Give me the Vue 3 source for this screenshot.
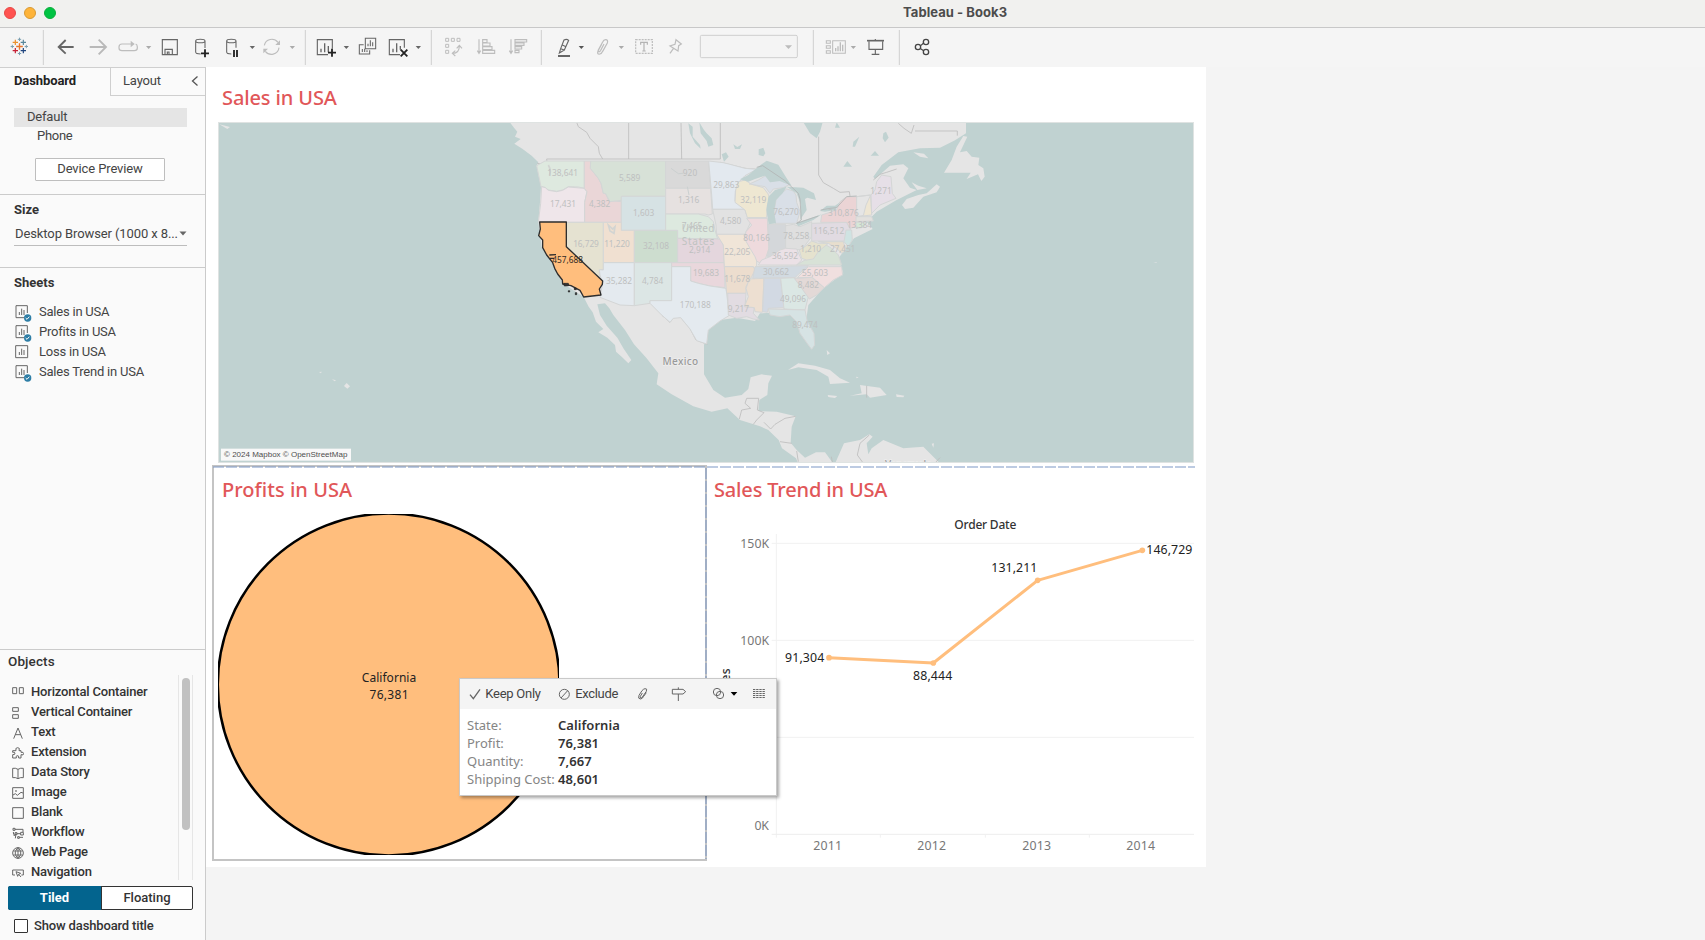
<script setup>
const plusPath = (x, y, r) => `M${x - r} ${y}H${x + r}M${x} ${y - r}V${y + r}`
const caret = (x, c) => `<path fill="${c}" d="M${x - 8} 138h16l-8 9z"/>`
const S = (c, w, d, extra = '') => `<path fill="none" stroke="${c}" stroke-width="${w}" ${extra} d="${d}"/>`
const sep = (x) => `<path stroke="#cfcfcf" stroke-width="3" d="M${x} 90V195"/>`

/* Artwork units are one third of a pixel; each slot starts at its own x. */
const slots = [
  { x: 0, art:
    S('#e8762d', 4, plusPath(58.5, 139.5, 10)) + S('#eb912c', 3.6, plusPath(46, 127, 8)) +
    S('#59879b', 3.6, plusPath(70, 127, 8)) + S('#c72035', 3.6, plusPath(46, 152, 8)) +
    S('#1f447e', 3.6, plusPath(70, 152, 8)) +
    S('#7b9fb0', 3, plusPath(58.5, 118, 5) + plusPath(58.5, 160.5, 5) + plusPath(37, 139.5, 5) + plusPath(79, 139.5, 5)) + sep(130) },
  { x: 52, art: S('#666', 5.6, 'M177 141H221M197 120L176 141L197 161') },
  { x: 84, art: S('#b9b9b9', 5.6, 'M269 141H317M296 119L318 141L296 163') },
  { x: 112, art: S('#bdbdbd', 3.6, 'M400 132H366Q357 132 357 141V144Q357 152 366 152H403Q412 152 412 144V141Q412 134 407 132') +
    '<path fill="#bdbdbd" d="M392 122l12 10-12 10z"/>' + caret(446, '#ababab') },
  { x: 155, art: S('#666', 3.4, 'M487 119H532V164H487ZM495 164V148H517V164M502 163V156H507V163') },
  { x: 186, art: S('#666', 3.2, 'M587 123C587 116 615 116 615 123C615 130 587 130 587 123V156Q587 162 602 162M615 123V144') + S('#222', 5.5, plusPath(615, 160, 12)) },
  { x: 218, art: S('#666', 3.2, 'M680 123C680 116 708 116 708 123C708 130 680 130 680 123V156Q680 162 694 162M708 123V143') + S('#222', 5.5, 'M702 150V171M711 150V171') + caret(757, '#666') },
  { x: 260, art: S('#bdbdbd', 3.4, 'M793 136C797 116 822 112 834 127M837 143C834 166 807 168 796 154') +
    '<path fill="#bdbdbd" d="M840 121v14h-14zM790 160v-14h14z"/>' + caret(877, '#ababab') + sep(916) },
  { x: 310, art: S('#666', 3.4, 'M984 164H952V119H997V146') + S('#666', 4, 'M963 157V146M974 157V130M985 157V138') + S('#222', 5.5, plusPath(996, 158, 12)) + caret(1039, '#666') },
  { x: 354, art: S('#666', 3.2, 'M1096 115H1127V146H1096ZM1091 134H1078V162H1109V151') + S('#666', 3.2, 'M1104 139V131M1111 139V121M1118 139V127M1087 156V147M1094 156V146M1101 156V151') },
  { x: 384, art: S('#666', 3.4, 'M1200 164H1168V119H1213V143') + S('#666', 4, 'M1179 157V146M1190 157V130M1201 149V138') + S('#222', 5.5, 'M1202 149L1222 169M1222 149L1202 169') + caret(1255, '#666') + sep(1294) },
  { x: 440, art: S('#bdbdbd', 3, 'M1337 115h9v9h-9zM1354 115h9v9h-9zM1371 115h9v9h-9zM1337 133h9v9h-9zM1337 151h9v9h-9z') +
    S('#bdbdbd', 3.4, 'M1358 160Q1378 160 1378 138M1366 152L1357 160L1366 168M1370 145L1378 136L1386 145') },
  { x: 470, art: S('#bdbdbd', 3.4, 'M1437 118V158M1432 152L1437 160L1442 152M1448 119h13v9h-13zM1448 129h22v9h-22zM1448 140h28v9h-28zM1448 151h36v9h-36z') },
  { x: 503, art: S('#bdbdbd', 3.4, 'M1533 118V158M1528 152L1533 160L1538 152M1545 119h35v7h-35zM1545 129h27v7h-27zM1545 140h20v7h-20zM1545 151h12v7h-12z') + sep(1624) },
  { x: 550, art: S('#666', 3.3, 'M1692 120Q1700 116 1706 121L1693 150L1682 146ZM1682 146L1678 159L1693 150M1687 135L1698 140') + S('#666', 6, 'M1674 168H1710') + caret(1744, '#555') },
  { x: 592, art: S('#bdbdbd', 3.6, 'M1805 133L1794 153Q1790 164 1800 162Q1805 161 1808 154L1822 129Q1825 119 1817 119Q1811 119 1808 126L1795 150Q1794 156 1799 155L1802 151L1812 132') + caret(1864, '#ababab') },
  { x: 632, art: S('#bdbdbd', 3.6, 'M1907 119H1957V160H1907Z', 'stroke-dasharray="6 3"') + S('#b4b4b4', 3.6, 'M1922 134V127H1942V134M1932 127V153M1927 153H1937') },
  { x: 664, art: S('#bdbdbd', 3.6, 'M2028 119L2044 132L2036 137L2034 153L2010 138L2025 133ZM2020 146L2010 160') },
  { x: 696, art: '<rect x="2101" y="106" width="291" height="67" rx="4" fill="#f4f4f4" stroke="#cfcfcf" stroke-width="3"/><path fill="#bcbcbc" d="M2355 136h21l-10.500 11z"/>' + sep(2440) },
  { x: 818, art: S('#bdbdbd', 3.2, 'M2479 122h12v8h-12zM2479 137h12v8h-12zM2479 152h12v8h-12zM2498 122h38v38h-38z') + S('#bdbdbd', 4, 'M2507 154V144M2514 154V139M2521 154V127M2528 154V134') + caret(2560, '#ababab') },
  { x: 862, art: S('#666', 5, 'M2601 122H2652') + S('#666', 3.4, 'M2607 124V148H2648V124M2626 117V122M2626 148V163M2615 163H2638') + sep(2698) },
  { x: 904, art: S('#444', 3.6, 'M2762 137L2771 129M2762 146L2771 152') + '<g fill="none" stroke="#444" stroke-width="4"><circle cx="2778" cy="126" r="8"/><circle cx="2754" cy="141" r="8"/><circle cx="2778" cy="156" r="8"/></g>' },
  { x: 940 }
]
const tools = slots.slice(0, -1).map((s, i) => ({ ...s, w: slots[i + 1].x - s.x }))

const sheets = [
  { name: 'Sales in USA', used: true },
  { name: 'Profits in USA', used: true },
  { name: 'Loss in USA', used: false },
  { name: 'Sales Trend in USA', used: true }
]

const objects = [
  { name: 'Horizontal Container', d: 'M2 2H14V20H2ZM22 2H34V20H22Z' },
  { name: 'Vertical Container', d: 'M2 2H19V13H2ZM2 23H19V34H2Z' },
  { name: 'Text', d: 'M5 35L18 3L31 35M10 23H26' },
  { name: 'Extension', d: 'M2 33V23Q10 24 9 18Q8 14 2 16V11H12Q9 2 17 2Q25 2 21 11H27V16Q35 14 35 20Q35 26 27 23V33H20Q22 25 15 26Q11 27 13 33Z' },
  { name: 'Data Story', d: 'M18 7Q10 2 2 4V32Q10 30 18 35Q26 30 34 32V4Q26 2 18 7V35' },
  { name: 'Image', d: 'M2 2H34V34H2ZM3 24L10 20L16 25L27 16L33 18M11 11h2v2h-2z' },
  { name: 'Blank', d: 'M2 2H34V34H2Z' },
  { name: 'Workflow', d: 'M3 4h6v6h-6zM9 7H33M33 7V15M9 17h6v6h-6zM15 20H26M26 16h8v8h-8zM5 27L12 20L10 34M17 29h5v5h-5zM22 31H33M4 15Q3 24 10 26' },
  { name: 'Web Page', d: 'M18 2A16 16 0 1 0 18 34A16 16 0 1 0 18 2C7 12 7 24 18 34C29 24 29 12 18 2V34M4 12H32M4 24H32' },
  { name: 'Navigation', d: 'M9 24H2V9H34V24H28M12 14L26 19L20 22L17 28ZM20 22L27 30' }
]

/* Map shapes: west group and east group share the units above. */
const west = [
  ['#dee9df', '140,152 165,138 283,138 283,220 265,216 235,215 218,225 200,229 175,225 165,217 153,215'],
  ['#efe6ea', '155,215 166,218 175,226 200,230 218,226 235,216 283,220 291,230 284,262 284,322 145,322 152,265'],
  ['#ead6d7', '283,138 302,138 301,160 325,190 333,205 340,235 347,236 356,256 394,260 394,322 284,322 284,262 291,230 283,220'],
  ['#d7e1d7', '302,138 527,138 527,244 394,244 394,256 360,260 347,236 340,235 333,205 325,190 301,160'],
  ['#d6e2e4', '394,244 527,244 527,346 394,346'],
  ['#e5e2d1', '229,322 340,322 340,463 328,466 328,490 229,397'],
  ['#f0e0d1', '340,322 394,322 394,346 433,346 433,443 340,443'],
  ['#cdddcf', '433,346 563,346 563,443 433,443'],
  ['#e4eaef', '340,443 433,443 433,572 390,570 330,547 338,505 330,480 328,464 340,465'],
  ['#dce6e5', '433,443 545,443 545,557 480,557 480,565 433,572'],
  ['#d9d9d9', '527,138 656,138 662,220 527,220'],
  ['#e6e1e0', '527,220 662,220 667,297 655,300 645,297 527,297'],
  ['#dde9df', '527,297 625,297 655,305 670,320 675,345 683,372 563,370 563,346 527,346'],
  ['#e4d6dd', '563,370 690,372 700,390 703,443 563,443'],
  ['#e9d7dc', '545,443 703,443 705,518 660,513 625,505 602,498 602,455 545,455'],
  ['#e4eaef', '545,455 602,455 602,498 625,505 660,513 708,520 713,560 717,602 690,618 655,645 650,687 620,677 600,642 572,608 550,610 540,622 515,600 480,565 480,557 545,557'],
  ['#e3e9ef', '656,138 700,143 720,148 765,160 800,163 765,182 748,200 748,218 736,228 735,258 768,283 668,283 665,240'],
  ['#e2e2e2', '668,283 765,283 768,295 785,315 765,358 680,358 678,330'],
  ['#f0e5d8', '680,358 765,358 772,372 785,400 800,430 800,455 790,465 790,455 703,455 700,390'],
  ['#ecddce', '703,455 790,455 795,465 785,485 768,515 768,535 710,535'],
  ['#e2dce2', '713,535 768,535 765,575 793,578 790,595 808,615 790,612 770,605 740,610 715,600']
]
const east = [
  ['#eee7d2', '137,225 145,200 165,195 185,208 220,218 233,235 240,250 232,270 230,308 172,308 165,285 135,262'],
  ['#eedadd', '170,310 232,310 237,400 225,435 210,444 200,438 195,425 180,400 163,370 168,350 185,330'],
  ['#d4d7da', '233,328 287,328 287,400 265,412 255,425 232,425 237,395'],
  ['#dfdfdf', '287,332 310,328 330,335 365,320 365,365 355,378 335,405 287,400'],
  ['#d9dfe7', '255,325 252,290 258,255 270,238 290,222 310,228 318,240 320,262 330,290 320,325'],
  ['#d9dfe7', '178,207 205,195 230,180 240,200 265,195 300,208 280,218 250,222 240,235 225,215'],
  ['#ebe1e6', '205,450 215,435 240,425 270,405 287,400 320,402 335,435 320,450'],
  ['#d2dae1', '195,455 355,452 325,478 315,488 188,490'],
  ['#eddfd1', '178,492 222,490 217,592 195,590 193,578 163,575 175,545 168,520'],
  ['#d2d9e3', '222,490 272,490 282,578 235,580 232,592 218,590'],
  ['#dbe7e4', '272,490 315,488 355,545 345,585 282,582'],
  ['#d6e3e4', '235,582 345,585 352,620 372,655 374,690 365,703 355,690 330,655 320,620 300,600 270,605 240,600'],
  ['#e3d9d7', '313,490 365,487 403,518 380,540 358,552 335,520'],
  ['#f0dfdf', '322,488 355,455 455,455 458,480 430,495 403,518 367,487'],
  ['#d8e2d7', '320,450 345,435 370,430 400,385 425,400 445,420 455,450'],
  ['#e5e2ce', '328,405 345,395 365,378 385,385 415,385 385,410 370,432 350,435 335,430'],
  ['#e1dbe2', '365,325 470,322 482,345 470,378 365,378'],
  ['#ebd4d5', '392,322 395,300 440,285 450,260 470,245 500,245 500,335 480,340 470,322'],
  ['#eee6d3', '500,245 542,240 545,300 500,305 520,302 528,270 542,240'],
  ['#e6dfe7', '545,295 543,240 555,225 560,200 575,180 603,185 607,235 618,250 570,270'],
  ['#e2e0dd', '498,305 545,305 550,318 498,320'],
  ['#d5e8d7', '498,322 530,322 520,337 498,340'],
  ['#cfe3e2', '468,345 485,345 487,375 475,395 462,380'],
  ['#e8decd', '385,380 460,380 468,405 455,415 440,400 415,385']
]
const westLabels = [
  ['138,641', 218, 183, 92], ['5,589', 419, 198, 64], ['920', 600, 183, 43], ['29,863', 709, 219, 78],
  ['17,431', 219, 276, 78], ['4,382', 329, 276, 64], ['1,603', 461, 303, 64], ['1,316', 596, 264, 64], ['4,580', 722, 327, 64],
  ['7,465', 606, 341, 62], ['16,729', 288, 396, 77], ['11,220', 381, 396, 77], ['32,108', 498, 402, 78], ['2,914', 629, 414, 64],
  ['35,282', 387, 507, 78], ['4,784', 488, 507, 64], ['19,683', 648, 483, 78], ['170,188', 616, 578, 93]
]
const eastLabels = [
  ['32,119', 190, 264, 78], ['76,270', 288, 300, 76], ['310,876', 460, 303, 92], ['1,271', 573, 237, 64],
  ['80,166', 200, 378, 80], ['78,258', 319, 372, 78], ['116,512', 416, 357, 93], ['13,384', 508, 339, 74],
  ['22,205', 142, 420, 78], ['36,592', 285, 432, 78], ['1,210', 362, 411, 62], ['27,451', 458, 411, 76],
  ['11,678', 142, 501, 78], ['30,662', 258, 480, 78], ['55,603', 375, 483, 78], ['8,482', 355, 519, 64],
  ['9,217', 145, 591, 64], ['49,096', 309, 561, 78], ['89,474', 345, 639, 76]
]

const years = [['2011', 383], ['2012', 695], ['2013', 1010], ['2014', 1322]]
const points = [[387, 593], [700, 609], [1013, 361], [1327, 271]]
const facts = [['State:', 'California'], ['Profit:', '76,381'], ['Quantity:', '7,667'], ['Shipping Cost:', '48,601']]
</script>

<template>
  <div class="app">
    <header class="titlebar">
      <i class="dot red"></i><i class="dot amber"></i><i class="dot green"></i>
      <h1>Tableau - Book3</h1>
    </header>
    <nav class="toolbar">
      <svg v-for="t in tools" :key="t.x" :width="t.w" height="39" :viewBox="`${t.x * 3} 84 ${t.w * 3} 117`" v-html="t.art"></svg>
    </nav>

    <div class="body">
      <aside class="side">
        <div class="tabs">
          <b>Dashboard</b>
          <div class="tab"><span>Layout</span>
            <svg width="8" height="12" viewBox="0 0 8 12"><path d="M6.500 1.500L1.500 6l5 4.500" fill="none" stroke="#555" stroke-width="1.300" /></svg>
          </div>
        </div>
        <section class="devices">
          <div class="device active">Default</div>
          <div class="device phone">Phone</div>
          <button class="preview">Device Preview</button>
        </section>
        <section class="size">
          <h2>Size</h2>
          <div class="select"><span>Desktop Browser (1000 x 8...</span>
            <svg width="8" height="5" viewBox="0 0 8 5"><path d="M.5.500h7L4 4.500z" fill="#666" /></svg>
          </div>
        </section>
        <section class="sheets">
          <h2>Sheets</h2>
          <div v-for="s in sheets" :key="s.name" class="sheet">
            <svg width="18" height="18" viewBox="0 0 54 54">
              <path :d="s.used ? 'M27 38H3V2H37V24' : 'M2 2H38V38H2Z'" fill="none" stroke="#666" stroke-width="3" />
              <path d="M13 30V21M20 30V11M27 30V15" stroke="#666" stroke-width="3" />
              <template v-if="s.used">
                <circle cx="38" cy="39" r="11" fill="#2e7ea6" />
                <path d="M32 39l4 4 7-8" fill="none" stroke="#fff" stroke-width="3" />
              </template>
            </svg>
            <span>{{ s.name }}</span>
          </div>
        </section>
        <section class="objects">
          <h2>Objects</h2>
          <div class="objwrap">
            <div class="objlist">
              <div v-for="o in objects" :key="o.name" class="object">
                <svg width="12" height="12" viewBox="0 0 36 36"><path :d="o.d" fill="none" stroke="#666" stroke-width="3" /></svg>
                <span>{{ o.name }}</span>
              </div>
            </div>
            <div class="scroll"><i></i></div>
          </div>
          <div class="mode"><b>Tiled</b><span>Floating</span></div>
          <div class="check"><i></i><span>Show dashboard title</span></div>
        </section>
      </aside>

      <main class="board">
        <h3 class="maptitle">Sales in USA</h3>
        <svg class="map" width="976" height="341" viewBox="-816 21 2928 1023">
          <rect x="-816" y="21" width="2928" height="1023" fill="#c0d2d1" />
          <g fill="#e5e5e5">
            <path d="M58 20L72 38L82 50L75 65L92 72L73 86L98 102L125 122L145 142L140 152L153 215L150 262L145 322L155 395L190 450L218 505L281 546L296 575L308 592L318 620L340 642L325 652L352 668L375 690L378 710L395 725L415 745L424 735L400 700L382 668L350 632L330 600L322 568L345 565L358 580L370 600L405 645L432 688L470 730L505 775L500 808L545 838L610 874L665 890L712 880L750 915L810 934L835 945L866 975L876 1000L918 1030L925 1046L1030 1046L1005 1012L978 1012L945 1028L920 1005L902 983L905 935L917 904L860 890L805 888L808 855L832 840L835 805L846 782L815 778L782 787L775 822L755 840L705 848L670 825L642 778L642 690L655 645L690 615L740 608L795 618L810 595L870 592L920 605L950 655L965 703L974 685L948 620L955 570L1000 520L1060 475L1045 430L1068 400L1092 370L1148 342L1130 320L1160 290L1220 255L1280 225L1260 218L1240 190L1255 160L1240 148L1200 152L1155 192L1150 185L1175 150L1225 112L1290 100L1350 98L1395 76L1428 55L1428 20Z" />
            <path d="M105 82L130 94L170 128L175 155L140 135Z" />
            <path d="M1236 270L1250 252L1285 240L1310 235L1340 208L1350 215L1340 232L1300 245L1270 278L1245 282Z" />
            <path d="M1362 173L1385 135L1400 95L1420 63L1432 65L1410 112L1430 108L1445 125L1468 128L1465 150L1480 160L1484 185L1474 198L1464 178L1430 192L1442 173Z" />
            <path d="M1270 112L1302 116L1315 130L1290 125ZM1265 202L1285 212L1310 220L1282 225Z" />
            <path d="M894 765L925 745L975 752L1020 765L1050 790L1080 803L1020 807L1015 785L980 765L925 757Z" />
            <path d="M1110 810L1170 818L1190 840L1140 848L1130 838L1080 842L1115 835ZM1013 840L1042 843L1035 849L1015 846ZM1218 838L1243 842L1240 847L1220 846ZM1010 705L1020 715L1012 720ZM1098 785L1106 787L1100 790Z" />
            <path d="M1035 1046L1062 985L1110 975L1138 958L1148 965L1130 985L1135 1018L1145 1000L1180 975L1240 1000L1300 995L1345 1040L1350 1046Z" />
            <path d="M-438 813L-430 804L-420 814L-428 821ZM-474 793L-462 796L-466 799ZM-513 771L-505 770L-507 775Z" />
            <path d="M-812 28L-780 36L-788 42ZM1325 986L1332 985L1330 998ZM1990 441H2000V443Z" />
          </g>
          <g fill="#c0d2d1">
            <path d="M595 25L608 35L608 65L630 90L632 101L615 85L600 55ZM628 22L642 45L650 55L665 70L670 90L655 95L650 78L632 55ZM940 22H998L990 50L980 70L960 55ZM730 88L742 96L756 88L750 102L735 102ZM806 103L820 98L826 115L820 124L806 120ZM1090 80L1108 65L1095 95L1088 95ZM1060 155L1072 138L1086 155ZM1142 122L1155 108L1167 122ZM695 118L708 112L716 125L702 140ZM1180 55L1188 50L1196 68L1185 82L1178 70ZM1040 22L1050 38L1035 38Z" />
          </g>
          <g class="borders">
            <path d="M260 22L265 35L290 52L300 70L325 95L328 115L338 132M416 22V132M573 22L575 132M691 22V132H170L172 150L142 145M691 142L765 160L800 163L840 155M986 65V180L1000 203L1030 220L1050 232L1078 230L1080 243M1225 25L1242 40L1264 55L1272 30M1275 48H1402V62M1150 195L1170 178L1190 172L1220 162" />
            <path d="M515 600L540 622L550 608L572 607L600 640L618 675L652 688M770 850H806L802 885M770 850L765 865L782 880L755 885L748 912M802 885L822 893L800 915L790 928M822 922L842 942L855 928L885 910L917 904M870 980L905 985M920 1008L925 1040M1130 812V848M1138 960L1110 985L1102 1020L1118 1042M1024 1025L1028 1046M1350 1028L1335 1044" />
          </g>
          <g class="state">
            <polygon v-for="(p, i) in west" :key="i" :fill="p[0]" :points="p[1]" />
            <g transform="translate(600 0)">
              <polygon v-for="(p, i) in east" :key="i" :fill="p[0]" :points="p[1]" />
            </g>
          </g>
          <g transform="translate(600 0)" fill="#c0d2d1">
            <path d="M150 193L175 180L205 155L230 137L265 149L290 190L305 212L270 198L240 202L225 182L195 192L175 200ZM236 328L229 285L235 245L255 225L290 215L278 235L258 255L252 290L258 325ZM290 215L340 218L372 235L378 255L352 248L345 252L350 285L330 315L333 270L320 235ZM318 325L345 315L395 298L370 315L325 334ZM390 288L410 272L435 272L450 262L435 285L405 290Z" />
            <path d="M200 157L218 152L285 197L325 235L330 252L334 315L320 325L385 303M392 285L420 280L440 278L470 245L500 243" fill="none" stroke="#b2b4b4" stroke-width="2.500" />
          </g>
          <path d="M175 150Q185 168 178 182M355 330L368 342L375 335L372 355L360 348Z" fill="none" stroke="#d2d4d2" stroke-width="5" />
          <path d="M543 160L565 176L580 175M592 215L597 240" fill="none" stroke="#cbd0d0" stroke-width="3" />
          <path class="cal" d="M149 321L229 321V395L338 498L337 508L328 522L333 540L281 546L270 526L243 512L218 507L217 495L203 477L194 460L188 443L170 420L158 398L158 375L146 362L151 342ZM178 420L198 419M180 430H192" />
          <path d="M221 505h14l1 7-13 1zM235 527h4v4h-4zM253 519h6v5h-6zM256 533h4v6h-4z" fill="#333" stroke="#222" stroke-width="2" />
          <g class="maplabel">
            <text v-for="l in westLabels" :key="l[0]" :x="l[1]" :y="l[2]" :textLength="l[3]">{{ l[0] }}</text>
            <g transform="translate(600 0)">
              <text v-for="l in eastLabels" :key="l[0]" :x="l[1]" :y="l[2]" :textLength="l[3]">{{ l[0] }}</text>
            </g>
            <text class="callabel" x="233" y="445" textLength="92">457,688</text>
          </g>
          <g class="country">
            <text x="624" y="351" textLength="98">United</text>
            <text x="624" y="391" textLength="98">States</text>
            <text class="mx" x="571" y="750" textLength="107">Mexico</text>
            <text class="mx" x="1255" y="1058" textLength="140">Venezuela</text>
          </g>
          <rect class="frame" x="-814.500" y="22.500" width="2925" height="1020" />
          <rect x="-807" y="1001" width="390" height="36" fill="#f8f8f8" />
          <text class="credit" x="-798" y="1026" textLength="370">© 2024 Mapbox © OpenStreetMap</text>
        </svg>

        <div class="lower">
          <section class="profit">
            <h3>Profits in USA</h3>
            <svg class="bubble" width="341" height="341" viewBox="0 0 341 341">
              <circle cx="170.700" cy="170.500" r="170.900" fill="#ffbe7d" stroke="#000" stroke-width="2.500" />
              <text x="171" y="168" textLength="54.500">California</text>
              <text x="171" y="185" textLength="39">76,381</text>
            </svg>
          </section>
          <section class="trend">
            <h3>Sales Trend in USA</h3>
            <svg class="chart" width="486" height="340" viewBox="24 165 1458 1020">
              <path d="M215 250H1482M215 541H1482M215 832H1482M229 222V1133M541 1124V1133M856 1124V1133M1168 1124V1133" stroke="#f1f1f1" stroke-width="3" fill="none" />
              <path d="M215 1123H1482" stroke="#ededed" stroke-width="3" />
              <polyline :points="points.map(p => p.join()).join(' ')" fill="none" stroke="#ffbe7d" stroke-width="9" stroke-linejoin="round" />
              <circle v-for="p in points" :key="p[0]" :cx="p[0]" :cy="p[1]" r="8.500" fill="#ffbe7d" />
              <text class="head" x="856" y="207" textLength="186">Order Date</text>
              <g class="axis">
                <text x="164" y="264" textLength="87">150K</text>
                <text x="164" y="555" textLength="87">100K</text>
                <text x="185" y="1110" textLength="43">0K</text>
                <text v-for="y in years" :key="y[0]" :x="y[1]" y="1170" textLength="86">{{ y[0] }}</text>
              </g>
              <text class="head" transform="translate(90 672) rotate(-90)" textLength="94">Sales</text>
              <g class="value">
                <text x="314" y="606" textLength="118">91,304</text>
                <text x="698" y="660" textLength="118">88,444</text>
                <text x="943" y="336" textLength="138">131,211</text>
                <text x="1408" y="282" textLength="138">146,729</text>
              </g>
            </svg>
          </section>
          <svg class="guides" width="983" height="396" viewBox="0 0 983 396">
            <path d="M1 2H983M494 3V394" fill="none" stroke="#7b98c6" stroke-opacity=".5" stroke-width="2" stroke-dasharray="11 2" />
          </svg>
        </div>

        <div class="tip">
          <div class="tipbar">
            <svg width="318" height="30" viewBox="30 57 954 90">
              <g fill="none" stroke="#666" stroke-width="3">
                <path d="M60 104L70 116L90 88" stroke-width="4" />
                <circle cx="343" cy="103" r="15" /><path d="M333 114L353 92" />
                <path d="M577 99L571 109Q569 116 575 114L589 94Q593 85 585 86Q580 87 576 92L567 106Q563 117 571 117Q577 117 581 109L589 98" />
                <path d="M667 88H699L707 95L699 102H667ZM685 82V88M685 102V123" />
                <circle cx="801" cy="96" r="11" /><circle cx="810" cy="105" r="11" />
                <path d="M909 88.500H945M909 94.500H945M909 100.500H945M909 106.500H945M909 112.500H945" stroke-dasharray="7 2.500" />
              </g>
              <path d="M842 96h20l-10 11z" />
              <text x="106" y="115" textLength="167">Keep Only</text>
              <text x="376" y="115" textLength="129">Exclude</text>
            </svg>
          </div>
          <dl>
            <template v-for="f in facts" :key="f[0]"><dt>{{ f[0] }}</dt><dd>{{ f[1] }}</dd></template>
          </dl>
        </div>
      </main>
    </div>
  </div>
</template>

<style>
body { background: #f4f4f4; overflow: hidden; }
</style>

<style scoped>
* { box-sizing: border-box; }
.app { width: 1705px; height: 940px; overflow: hidden; background: #f4f4f4; font: 13px/18px Roboto, "Liberation Sans", sans-serif; color: #444; }
h1, h2, h3, dl, dd { margin: 0; }
svg { display: block; flex: none; }
.titlebar { height: 28px; background: #f1f1ef; border-bottom: 1px solid #c8c8c8; display: flex; align-items: center; padding: 0 0 2px 4px; gap: 8px; }
.dot { width: 12px; height: 12px; border-radius: 50%; }
.red { background: #ff5350; border: 1px solid #e84845; }
.amber { background: #feb43a; border: 1px solid #d99a33; }
.green { background: #00c343; border: 1px solid #0bae3b; }
h1 { font: 700 13px/16px Inter, sans-serif; color: #4c4c4c; margin: 0 0 1px 839px; white-space: nowrap; letter-spacing: .06px; }
.toolbar { height: 39px; display: flex; background: #f5f5f5; }
.body { display: flex; height: 873px; }
.side { width: 206px; flex: none; background: #fafafa; border-right: 1px solid #cbcbcb; border-top: 1px solid #cfcfcf; display: flex; flex-direction: column; }
.tabs { display: flex; height: 28px; line-height: 26px; }
.tabs b { width: 110px; padding-left: 14px; color: #222; letter-spacing: -.1px; }
.tab { flex: 1; border-left: 1px solid #cfcfcf; border-bottom: 1px solid #cfcfcf; display: flex; align-items: center; justify-content: space-between; padding: 0 6px 2px 12px; letter-spacing: -.15px; }
.devices { height: 99px; padding: 12px 18px 0 14px; border-bottom: 1px solid #cbcbcb; }
.device { height: 19px; padding-left: 13px; line-height: 18px; letter-spacing: -.2px; }
.active { background: #e5e5e5; }
.phone { padding-left: 23px; line-height: 18px; letter-spacing: -.3px; }
.preview { display: block; width: 130px; height: 23px; margin: 12px 0 0 21px; padding: 0 0 2px; background: #fff; border: 1px solid #bebebe; border-radius: 1px; font: inherit; line-height: 19px; color: #444; letter-spacing: -.12px; }
h2 { font-size: 13px; line-height: 18px; color: #333; }
.size { height: 73px; padding: 6px 18px 0 14px; border-bottom: 1px solid #cbcbcb; }
.select { display: flex; align-items: center; justify-content: space-between; height: 25px; margin-top: 2px; padding: 1px 0 0 1px; border-bottom: 1px solid #bdbdbd; white-space: nowrap; letter-spacing: -.1px; }
.sheets { flex: 1; padding: 6px 14px; }
.sheets h2 { margin-bottom: 10px; }
.sheet { display: flex; align-items: center; height: 20px; gap: 7px; letter-spacing: -.22px; }
.sheet svg { margin: 4px 0 0 1px; }
.sheet span { margin-left: -1px; }
.objects { height: 291px; border-top: 1px solid #cbcbcb; padding: 3px 12px 0 8px; color: #333; }
.objects h2 { font-size: 13.500px; line-height: 17px; font-weight: 500; letter-spacing: .1px; }
.objwrap { display: flex; height: 205px; margin-top: 5px; }
.objlist { width: 170px; overflow: hidden; padding-top: 7px; }
.object { display: flex; align-items: center; gap: 7px; height: 20px; padding-left: 4px; font-weight: 500; letter-spacing: -.18px; }
.object svg { margin-top: 1px; }
.scroll { width: 15px; border: solid #e6e6e6; border-width: 0 1px; padding: 3px 3px 0 3px; }
.scroll i { display: block; width: 8px; height: 152px; border-radius: 4px; background: #c1c1c1; }
.mode { display: flex; height: 24px; width: 185px; margin-top: 6px; border: 1px solid #333; border-radius: 2px; text-align: center; line-height: 21px; background: #fff; }
.mode b { width: 94px; margin: -1px 0 -1px -1px; line-height: 23px; background: #03648e; color: #fff; border-radius: 2px 0 0 2px; border-right: 1px solid #333; }
.mode span { flex: 1; font-weight: 500; }
.check { display: flex; align-items: center; margin-top: 7px; padding-left: 6px; gap: 6px; font-weight: 500; letter-spacing: -.15px; }
.check i { width: 14px; height: 14px; border: 1px solid #333; border-radius: 1px; background: #fff; }

.board { position: relative; width: 1000px; height: 800px; background: #fff; padding: 0 6px; }
h3 { font: 500 20px/28px "Noto Sans", sans-serif; color: #e15759; white-space: nowrap; letter-spacing: -.12px; }
.maptitle { height: 55px; padding: 17px 0 0 10px; }
.map { margin-left: 6px; }
.borders path { fill: none; stroke: #bdbdbd; stroke-width: 2.5px; stroke-linejoin: round; }
.state polygon { stroke: #d4d6d6; stroke-width: 3px; stroke-linejoin: round; }
.cal { fill: #ffbe7d; stroke: #2e2e2e; stroke-width: 4px; stroke-linejoin: round; }
.frame { fill: none; stroke: #dfe3e2; stroke-width: 3px; }
.maplabel text { font: 25px "Noto Sans", sans-serif; text-anchor: middle; fill: #bec0c0; }
.maplabel .callabel { fill: #2f2a24; }
.country text { font: 30px "Noto Sans", sans-serif; text-anchor: middle; fill: #bfc3c1; }
.country .mx { fill: #999; font-weight: 500; stroke: #eee; stroke-width: 4px; paint-order: stroke; }
.credit { font: 24px "Liberation Sans", sans-serif; fill: #4f4f4f; }
.lower { position: relative; display: flex; height: 396px; margin-top: 2px; }
.profit { width: 495px; border: 2px solid #c4c4c4; padding: 9px 0 0 4px; }
.profit h3 { padding-left: 4px; height: 38px; letter-spacing: .04px; }
.trend { padding: 11px 0 0 1px; }
.trend h3 { padding-left: 6px; height: 39px; letter-spacing: -.16px; }
.bubble text { font: 12px "Noto Sans", sans-serif; text-anchor: middle; fill: #222; }
.guides { position: absolute; left: 0; top: 0; pointer-events: none; }
.chart { font: 37px "Noto Sans", sans-serif; text-anchor: middle; }
.chart .head { font-size: 36px; font-weight: 500; fill: #333; }
.chart .axis { fill: #777; }
.chart .value { fill: #222; }
.tip { position: absolute; left: 253px; top: 611px; width: 318px; height: 118px; background: #fff; border: 1px solid #c9c9c9; box-shadow: 2px 2px 3px rgba(0, 0, 0, .35); }
.tipbar { height: 30px; background: #f4f4f4; overflow: hidden; }
.tipbar text { font: 39px Roboto, sans-serif; fill: #444; }
dl { display: grid; grid-template-columns: 91px 1fr; padding: 7px 0 0 7px; font: 13px/18px "Noto Sans", sans-serif; white-space: nowrap; }
dt { color: #858585; }
dd { color: #333; font-weight: 600; letter-spacing: .05px; }
</style>
